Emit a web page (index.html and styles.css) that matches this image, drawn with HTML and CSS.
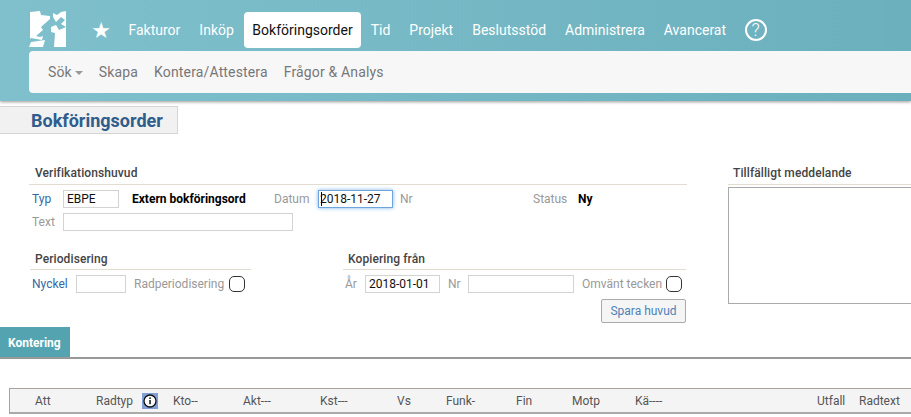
FILE: index.html
```html
<!DOCTYPE html>
<html lang="sv">
<head>
<meta charset="utf-8">
<title>Bokföringsorder</title>
<link rel="stylesheet" href="styles.css">
</head>
<body>
<header class="topbar">
  <nav class="mainnav">
    <svg class="logo" viewBox="0 0 38 37" width="38" height="37" aria-hidden="true">
      <path d="M1 2 11 1 12 5 21 6 21 9 12 17 14 20 7 26 11 27 14 26 13 30 2 28 1 29Z" fill="#fff"/>
      <path d="M2 32 16 30 14 37H0Z" fill="#fff"/>
      <path d="M24 3 28 5 32 2 37 1V17L32 14 36 10 32 7 27 12 24 7Z" fill="#fff"/>
      <path d="M22 17 27 15 30 20 37 17V37H25L26 23 22 22Z" fill="#fff"/>
    </svg>
    <span class="star">★</span>
    <a class="navlink">Fakturor</a>
    <a class="navlink">Inköp</a>
    <a class="navlink active">Bokföringsorder</a>
    <a class="navlink">Tid</a>
    <a class="navlink">Projekt</a>
    <a class="navlink">Beslutsstöd</a>
    <a class="navlink">Administrera</a>
    <a class="navlink">Avancerat</a>
    <span class="help">?</span>
  </nav>
  <nav class="subnav">
    <a class="sublink">Sök<i class="caret"></i></a>
    <a class="sublink">Skapa</a>
    <a class="sublink">Kontera/Attestera</a>
    <a class="sublink">Frågor &amp; Analys</a>
  </nav>
</header>

<h1 class="pagetitle">Bokföringsorder</h1>

<main class="formarea">
  <div class="leftcol">
    <h2 class="grouphead verif">Verifikationshuvud</h2>
    <div class="row row-typ">
      <label class="link lbl-typ">Typ</label>
      <input class="field f-typ" value="EBPE">
      <b class="strong s-typ">Extern bokföringsord</b>
      <label class="muted lbl-datum">Datum</label>
      <span class="field f-datum"><i class="cursor"></i>2018-11-27</span>
      <label class="muted lbl-nr">Nr</label>
      <label class="muted lbl-status">Status</label>
      <b class="strong">Ny</b>
    </div>
    <div class="row row-text">
      <label class="muted lbl-typ">Text</label>
      <input class="field f-text">
    </div>
    <div class="split">
      <div class="period">
        <h2 class="grouphead">Periodisering</h2>
        <div class="row row-sub">
          <label class="link lbl-nyckel">Nyckel</label>
          <input class="field f-nyckel">
          <label class="muted lbl-rad">Radperiodisering</label>
          <i class="check"></i>
        </div>
      </div>
      <div class="copy">
        <h2 class="grouphead">Kopiering från</h2>
        <div class="row row-sub">
          <label class="muted lbl-ar">År</label>
          <input class="field f-ar" value="2018-01-01">
          <label class="muted lbl-cnr">Nr</label>
          <input class="field f-cnr">
          <label class="muted lbl-omv">Omvänt tecken</label>
          <i class="check"></i>
        </div>
        <div class="actions"><button class="save">Spara huvud</button></div>
      </div>
    </div>
  </div>
  <aside class="rightcol">
    <h2 class="grouphead">Tillfälligt meddelande</h2>
    <div class="memo"></div>
  </aside>
</main>

<div class="tabs"><span class="tab">Kontering</span></div>

<div class="tablewrap">
  <div class="thead">
    <span class="c-att">Att</span>
    <span class="c-rad">Radtyp</span>
    <span class="c-info"><svg viewBox="0 0 16 16" width="16" height="16" aria-hidden="true"><circle cx="8" cy="8" r="6" fill="#fff" stroke="#111" stroke-width="1.3"/><rect x="7.3" y="7" width="1.5" height="4.2" fill="#111"/><rect x="7.3" y="4.4" width="1.5" height="1.6" fill="#111"/></svg></span>
    <span class="c-kto">Kto--</span>
    <span class="c-akt">Akt---</span>
    <span class="c-kst">Kst---</span>
    <span class="c-vs">Vs</span>
    <span class="c-funk">Funk-</span>
    <span class="c-fin">Fin</span>
    <span class="c-motp">Motp</span>
    <span class="c-ka">Kä----</span>
    <span class="c-utf">Utfall</span>
    <span class="c-txt">Radtext</span>
  </div>
</div>
</body>
</html>
```
FILE: styles.css
```css
* { box-sizing: border-box; }
html, body { margin: 0; padding: 0; overflow: hidden; }
body { width: 911px; height: 417px; background: #fff; font-family: Roboto, "Liberation Sans", sans-serif; font-size: 12px; color: #333; }

.topbar { height: 101px; padding: 10px 0 0 29px; background: linear-gradient(90deg, #7fc0cc, #6cb0bd); box-shadow: 0 1px 3px rgba(0,0,0,.4); }
.mainnav { display: flex; align-items: flex-start; height: 41px; }
.logo { flex: none; margin-right: 22px; }
.star { width: 24px; margin: 10px 6px 0 0; color: #fff; font: 22px/22px "DejaVu Sans", sans-serif; text-align: center; }
.navlink { padding: 0 9.5px; margin-top: 2px; height: 36px; line-height: 36px; font-size: 14px; color: #fff; white-space: nowrap; }
.navlink.active { background: #fff; color: #111; border-radius: 4px; padding: 0 8px; margin: 2px 0.5px 0 1px; }
.help { width: 22px; height: 22px; margin: 9px 0 0 9px; border: 2px solid #fff; border-radius: 50%; color: #fff; font-size: 18px; font-weight: 300; line-height: 18px; text-align: center; }

.subnav { display: flex; align-items: center; height: 42px; padding-left: 19px; background: #f7f7f7; border-radius: 4px 0 0 4px; }
.sublink { font-size: 14px; letter-spacing: .15px; color: #777; margin-right: 16px; white-space: nowrap; }
.caret { display: inline-block; margin: 0 0 2px 3px; border: 4px solid transparent; border-top-color: #999; border-bottom-width: 0; }

.pagetitle { width: 178px; height: 28px; margin: 5px 0 0; padding-left: 31px; background: #f1f1f1; border: 1px solid #d5d5d5; border-left: 0; font-size: 18px; line-height: 27px; font-weight: 700; color: #2f5d8c; white-space: nowrap; }

.formarea { display: flex; padding: 30px 0 0 29px; height: 193px; }
.leftcol { width: 658px; flex: none; }
.rightcol { width: 184px; margin-left: 41px; flex: none; }
.grouphead { margin: 0; height: 21px; padding-left: 6px; border-bottom: 1px solid #e2ddd0; font-size: 12px; letter-spacing: .1px; line-height: 18px; font-weight: 500; color: #444; white-space: nowrap; }
.rightcol .grouphead { margin-left: 0; padding-left: 5px; }
.split .grouphead { height: 20px; padding-left: 5px; }
.row { display: flex; align-items: center; white-space: nowrap; }
.row-typ { height: 27px; }
.row-text { height: 17px; margin-top: 1px; }
.row-sub { height: 24px; padding-top: 4px; }
.link { color: #34689f; }
.muted { color: #999; }
.strong { color: #000; font-weight: 700; }
.field { display: block; height: 18px; padding: 0 3px; margin: 0; border: 1px solid #d3d3d3; background: #fff; font: 12px/16px Roboto, sans-serif; color: #111; outline: 0; border-radius: 0; }

.lbl-typ { width: 34px; padding-left: 3px; }
.f-typ { width: 56px; }
.s-typ { margin-left: 13px; width: 142px; }
.lbl-datum { width: 44px; }
.f-datum { position: relative; width: 75px; border-color: #6fa5dd; box-shadow: 0 0 4px #7fb2e8; margin-right: 7px; padding-left: 1px; }
.cursor { position: absolute; left: 2px; top: 1px; width: 1px; height: 14px; background: #000; }
.lbl-nr { width: 133px; }
.lbl-status { width: 45px; }
.f-text { width: 230px; }

.split { display: flex; margin-top: 20px; }
.period { width: 221px; margin-left: 1px; }
.copy { width: 343px; margin-left: 92px; }
.lbl-nyckel { width: 46px; padding-left: 2px; }
.f-nyckel { width: 50px; }
.lbl-rad { margin: 0 3px 0 8px; width: 92px; }
.check { display: block; width: 16px; height: 16px; border: 1.5px solid #333; border-radius: 5px; background: #fff; }
.lbl-ar { width: 22px; padding-left: 2px; }
.f-ar { width: 75px; }
.lbl-cnr { width: 20px; margin-left: 8px; }
.f-cnr { width: 106px; }
.lbl-omv { margin: 0 2px 0 8px; width: 82px; }
.actions { display: flex; justify-content: flex-end; padding-top: 5px; }
.save { width: 85px; height: 24px; padding: 0; border: 1px solid #aaa; border-radius: 2px; background: #f5f5f5; color: #4e82b8; font: 12px Roboto, sans-serif; }
.memo { width: 190px; height: 117px; margin: 2px 0 0; border: 1px solid #aaa; background: #fff; }

.tabs { height: 32px; border-bottom: 2px solid #999; }
.tab { display: block; width: 70px; height: 30px; padding-left: 8px; background: #54a3b0; color: #fff; font-size: 12px; font-weight: 700; line-height: 32px; }

.tablewrap { padding: 29px 0 0 9px; }
.thead { position: relative; height: 26px; background: #f4f4f4; border: 1px solid #a9a39b; border-right: 0; border-bottom: 2px solid #aaa; color: #555; font-size: 12px; line-height: 24px; }
.thead span { position: absolute; top: 0; }
.c-att { left: 25px; }
.c-rad { left: 86px; }
.thead .c-info { left: 132px; top: 4px; width: 16px; height: 16px; background: #7f9fd6; display: block; }
.c-info svg { display: block; }
.c-kto { left: 163px; }
.c-akt { left: 233px; }
.c-kst { left: 310px; }
.c-vs { left: 387px; }
.c-funk { left: 436px; }
.c-fin { left: 506px; }
.c-motp { left: 562px; }
.c-ka { left: 625px; }
.c-utf { left: 807px; }
.c-txt { left: 849px; }
```
